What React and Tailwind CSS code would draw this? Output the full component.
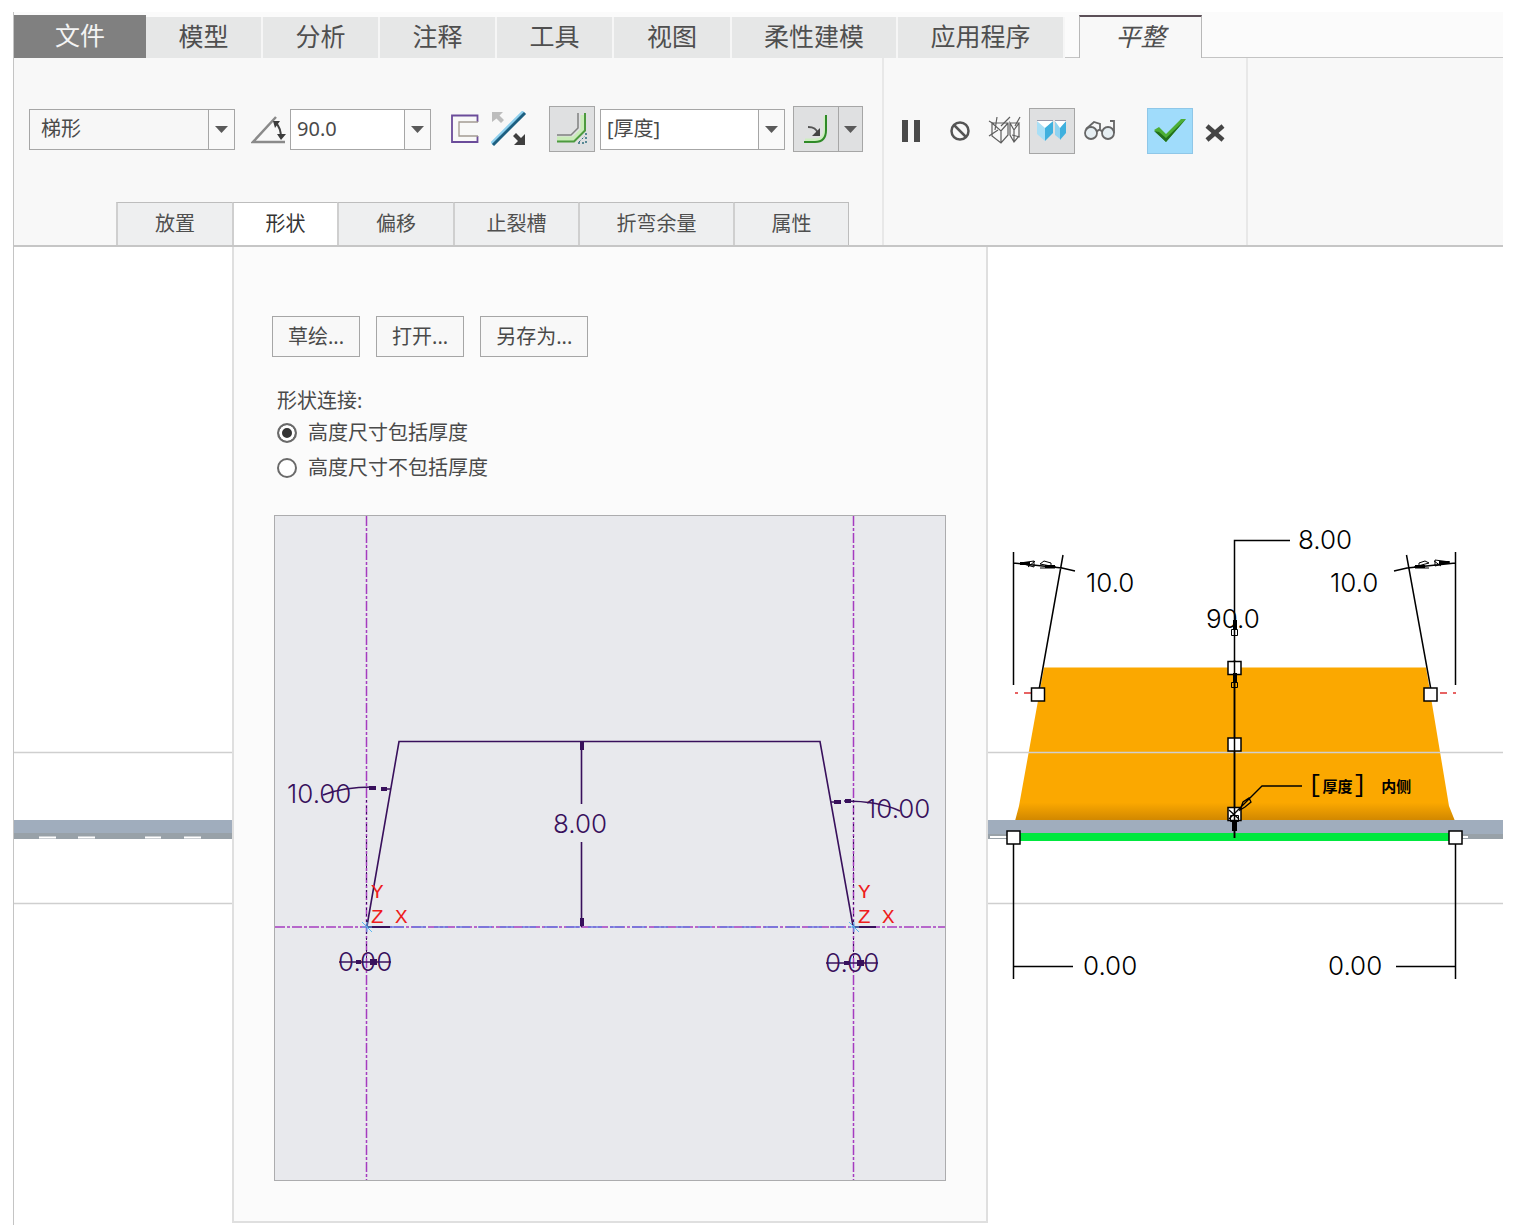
import React, { useState } from 'react';

const menuTabs = [
  { name: '模型', width: 'w-[117px]' },
  { name: '分析', width: 'w-[117px]' },
  { name: '注释', width: 'w-[117px]' },
  { name: '工具', width: 'w-[117px]' },
  { name: '视图', width: 'w-[118px]' },
  { name: '柔性建模', width: 'w-[166px]' },
  { name: '应用程序', width: 'w-[167px]' },
];

const subTabs = [
  { name: '放置', width: 'w-[116px]' },
  { name: '形状', width: 'w-[105px]' },
  { name: '偏移', width: 'w-[116px]' },
  { name: '止裂槽', width: 'w-[125px]' },
  { name: '折弯余量', width: 'w-[155px]' },
  { name: '属性', width: 'w-[116px]' },
];

function Caret() {
  return (
    <svg width="13" height="8" viewBox="0 0 13 8">
      <path d="M0 1h13L6.5 8z" fill="#5a5a5a" />
    </svg>
  );
}

function Combo({ label, options, width, bg }) {
  return (
    <div className={`relative h-[41px] shrink-0 ${width}`}>
      <select
        aria-label={label}
        className={`h-full w-full appearance-none border border-[#a6a6a6] pr-7 text-xl leading-6 text-[#4a4a4a] ${bg}`}
      >
        {options.map((o) => (
          <option key={o}>{o}</option>
        ))}
      </select>
      {/* arrow box over the select */}
      <span className="pointer-events-none absolute inset-y-0 right-0 flex w-[27px] items-center justify-center border border-[#a6a6a6] bg-[#f9f9f9]">
        <Caret />
      </span>
    </div>
  );
}

/* ---------- toolbar icons ---------- */

function AngleIcon() {
  return (
    <svg width="36" height="30" viewBox="0 0 36 30" fill="none">
      <path d="M25 3L2 28h32" stroke="#8a8a8a" strokeWidth="2.5" />
      <path d="M25 9c4 4 5 9 5 15" stroke="#444" strokeWidth="2" />
      <path d="M22 7h7l-5 7zM26 20h9l-5 6z" fill="#3c3c3c" />
    </svg>
  );
}

function ProfileIcon() {
  return (
    <svg width="28" height="30" viewBox="0 0 28 30" fill="none">
      <path d="M26.500 8V1.500H1V28h25.500v-6" stroke="#6b4c9a" strokeWidth="1.8" />
      <path d="M27 8H8v14h19" stroke="#a39a92" strokeWidth="1.3" />
    </svg>
  );
}

function FlipIcon() {
  return (
    <svg width="36" height="36" viewBox="0 0 36 36" fill="none">
      <path d="M1 33L33 1" stroke="#8fd0ee" strokeWidth="4.5" />
      <path d="M2 34L34 2" stroke="#1d5f80" strokeWidth="3" />
      <path d="M1 1h11L8.500 4.500l4.500 4.500-3 3-4.500-4.500L1 11z" fill="#bdbdbd" />
      <path d="M34 34H23l4-4-5-5 3-3 5 5 4-4z" fill="#3f3f3f" />
    </svg>
  );
}

function BendIcon() {
  return (
    <svg width="34" height="34" viewBox="0 0 34 34" fill="none">
      <path d="M2 27h17l9-9V3" stroke="#c9ecb8" strokeWidth="5" />
      <path d="M2 23h14l7-7V1" stroke="#808080" strokeWidth="1.5" />
      <path d="M2 29.500h17l11-11V1" stroke="#4d9a3f" strokeWidth="2" />
      <path d="M31 21v10H21" stroke="#2e6c7c" strokeWidth="1.5" strokeDasharray="2 2" />
      <path d="M24 30l6-6" stroke="#2e6c7c" strokeDasharray="2 2" />
    </svg>
  );
}

function InnerRadiusIcon() {
  return (
    <svg width="26" height="30" viewBox="0 0 26 30" fill="none">
      <path d="M2 26h10c7 0 10-4 10-11V2" stroke="#cdeec0" strokeWidth="3" />
      <path d="M1 28h11c8 0 11-4 11-12V1" stroke="#2f8a28" strokeWidth="2" />
      <path d="M5 13c6 0 8 2 10 6" stroke="#555" strokeWidth="2" />
      <path d="M17 14v8H9z" fill="#444" />
    </svg>
  );
}

function PauseIcon() {
  return (
    <svg width="20" height="24" viewBox="0 0 20 24" fill="#4b4b4b">
      <path d="M1 1h6v22H1zM13 1h6v22h-6z" />
    </svg>
  );
}

function NoneIcon() {
  return (
    <svg width="22" height="22" viewBox="0 0 22 22" fill="none" stroke="#555" strokeWidth="2.5">
      <circle cx="11" cy="11" r="8.500" />
      <path d="M5 5l12 12" />
    </svg>
  );
}

function WireframeIcon() {
  return (
    <svg width="34" height="30" viewBox="0 0 34 30" fill="none" stroke="#5e5e5e" strokeWidth="1.2">
      <path d="M4 7h16v12l-7 8-9-7zM4 7l9 8 7-8M13 15v12" />
      <path d="M22 7h9l-5 7-4-7v12l4 7 5-6M26 14v12M31 7v13" />
      <path d="M1 20l9-6M9 1L7 14M1 5l5 3M13 10l9-9M27 10l5-9M24 19l8 2" />
    </svg>
  );
}

function SolidPreviewIcon() {
  return (
    <svg width="32" height="26" viewBox="0 0 32 26">
      <path d="M1 3l8 6v14l-8-7z" fill="#a9dff6" />
      <path d="M9 9l8-6v12l-8 8z" fill="#3fb0de" />
      <path d="M1 3h16L9 10z" fill="#fff" />
      <path d="M19 3l5 6v12l-5-4z" fill="#8fd3f1" />
      <path d="M24 9l6-6v12l-6 7z" fill="#3fb0de" />
      <path d="M19 3h11l-6 7z" fill="#fff" />
      <path d="M1 2.500h16M19 2.500h11" stroke="#99a" />
    </svg>
  );
}

function GlassesIcon() {
  return (
    <svg width="34" height="24" viewBox="0 0 34 24" fill="none" stroke="#666" strokeWidth="1.8">
      <circle cx="8" cy="14" r="6" fill="#e6eef2" />
      <circle cx="25" cy="14" r="6" fill="#e6eef2" />
      <path d="M14 13c1-3 4-3 5 0M3 10l8-7 6 2v5M31 14V2h-4" />
    </svg>
  );
}

function CheckIcon() {
  return (
    <svg width="34" height="26" viewBox="0 0 34 26">
      <path d="M1 12l5-3 7 7L28 1h5L13 24z" fill="#4cae35" />
      <path d="M1 13l5 1 7 6L33 1 13 24z" fill="#22701c" />
    </svg>
  );
}

function CloseIcon() {
  return (
    <svg width="20" height="18" viewBox="0 0 20 18" stroke="#454545" strokeWidth="4.5">
      <path d="M2 2l16 14" />
      <path d="M18 2L2 16" />
    </svg>
  );
}

/* ---------- ribbon ---------- */

function MenuBar() {
  return (
    <nav className="flex h-[46px] items-end bg-[#fbfbfb] text-[25px] leading-8 text-[#4f4f4f]">
      <button className="h-[43px] w-[132px] shrink-0 bg-[#808080] pb-1 text-[#f4f4f4]">文件</button>
      {menuTabs.map((t) => (
        <button key={t.name} className={`h-[41px] shrink-0 border-r-2 border-[#f6f6f6] bg-[#e6e7e7] pb-1 ${t.width}`}>
          {t.name}
        </button>
      ))}
      <span className="h-full w-[14px] shrink-0 border-b border-[#c4c4c4]" />
      <button className="h-[43px] w-[123px] shrink-0 border-x border-t-2 border-x-[#b8b8b8] border-t-[#5c5058] bg-[#f8f8f8] pb-1 italic">
        平整
      </button>
      <span className="h-full flex-1 border-b border-[#c4c4c4]" />
    </nav>
  );
}

function Toolbar() {
  return (
    <div className="flex items-center pt-12 pl-[15px]">
      <Combo label="形状类型" options={['梯形']} width="w-[206px]" bg="bg-[#f7f7f7] pl-[11px]" />
      <span className="ml-4 flex w-[39px]">
        <AngleIcon />
      </span>
      <Combo label="折弯角度" options={['90.0']} width="w-[141px]" bg="bg-white pl-[6px]" />
      <button aria-label="轮廓" className="ml-5">
        <ProfileIcon />
      </button>
      <button aria-label="反向" className="ml-3">
        <FlipIcon />
      </button>
      <button
        aria-label="折弯"
        className="ml-[22px] flex h-[46px] w-[46px] shrink-0 items-center justify-center border border-[#a6a6a6] bg-[#dfe0e1]"
      >
        <BendIcon />
      </button>
      <span className="ml-[5px]">
        <Combo label="折弯半径" options={['[厚度]']} width="w-[185px]" bg="bg-white pl-[6px]" />
      </span>
      <div className="ml-2 flex h-[46px] w-[70px] border border-[#a6a6a6] bg-[#dfe0e1]">
        <button aria-label="内侧半径" className="flex flex-1 items-center justify-center border-r border-[#a6a6a6]">
          <InnerRadiusIcon />
        </button>
        <button aria-label="更多半径选项" className="flex w-[23px] items-center justify-center">
          <Caret />
        </button>
      </div>
    </div>
  );
}

function SubTabs({ active, onChange }) {
  return (
    <div className="flex pl-[102px] text-xl leading-6 text-[#4f4f4f]">
      {subTabs.map((t) => (
        <button
          key={t.name}
          onClick={() => onChange(t.name)}
          className={`h-[43px] shrink-0 border-t border-l-2 border-t-[#bdbdbd] border-l-[#cfcfcf] last:border-r last:border-r-[#bdbdbd] ${t.width} ${
            active === t.name ? 'bg-white text-[#333]' : 'bg-[#eeeff0]'
          }`}
        >
          {t.name}
        </button>
      ))}
    </div>
  );
}

function Actions() {
  return (
    <div className="flex w-[362px] shrink-0 items-center self-start pt-[2px] pl-[17px]">
      <button aria-label="暂停">
        <PauseIcon />
      </button>
      <button aria-label="无预览" className="ml-7">
        <NoneIcon />
      </button>
      <button aria-label="线框预览" className="ml-[17px]">
        <WireframeIcon />
      </button>
      <button
        aria-label="实体预览"
        className="ml-[7px] flex h-[46px] w-[46px] items-center justify-center border border-[#a6a6a6] bg-[#dfe0e1]"
      >
        <SolidPreviewIcon />
      </button>
      <button aria-label="查看" className="ml-2">
        <GlassesIcon />
      </button>
      <button
        aria-label="确定"
        className="ml-[30px] flex h-[46px] w-[46px] items-center justify-center border border-[#8fc7e8] bg-[#a0dcfb]"
      >
        <CheckIcon />
      </button>
      <button aria-label="取消" className="mt-1 ml-3">
        <CloseIcon />
      </button>
    </div>
  );
}

/* ---------- shape panel ---------- */

function SketchPreview() {
  return (
    <svg
      viewBox="275 516 670 664"
      className="block h-auto w-full fill-[#38105c] font-['Inter',sans-serif] text-[26px] font-light"
    >
      {/* centre lines */}
      <g stroke="#a53cc0" strokeWidth="1.5" strokeDasharray="10 2 3 2">
        <path d="M366.500 516V1180M853.500 516V1180M275 927H946" />
      </g>
      <path d="M368 927H853" stroke="#6b7be0" strokeWidth="1.5" strokeDasharray="14 8" />

      {/* trapezoid */}
      <path d="M367 926L399 741.500H820L853 926" fill="none" stroke="#38105c" strokeWidth="1.6" />
      <path d="M366.500 800V962M853.500 800V962" stroke="#38105c" strokeDasharray="2 4" />
      <path d="M367 927h23M853 927h23" stroke="#38105c" strokeWidth="2" />
      <path d="M367 922v10M362 927h10M362 922l10 10M854 922v10M849 927h10M849 922l10 10" stroke="#58b8f0" />

      {/* height dimension */}
      <path d="M581.500 742v62M581.500 842v85" stroke="#38105c" strokeWidth="1.6" />
      <path d="M580 742h4v8h-4zM580 918h4v8h-4z" />
      <text x="553" y="833">8.00</text>

      {/* angle dimensions */}
      <path d="M323 795q20-8 50-8M381 789h10" fill="none" stroke="#38105c" strokeWidth="1.6" />
      <path d="M369 786h7v4h-7zM381 787h6v4h-6z" />
      <text x="287" y="803">10.00</text>
      <path d="M831 802h8M844 801q35 0 56 10" fill="none" stroke="#38105c" strokeWidth="1.6" />
      <path d="M834 800h7v4h-7zM845 799h6v4h-6z" />
      <text x="866" y="818">10.00</text>

      {/* offsets */}
      <path d="M339 962h52M826 963h52" stroke="#38105c" strokeWidth="1.6" />
      <path d="M356 960h5v4h-5zM370 959h7v6h-7zM844 961h5v4h-5zM857 960h7v6h-7z" />
      <text x="338" y="971">0.00</text>
      <text x="825" y="972">0.00</text>

      {/* coordinate systems */}
      <g className="fill-[#ee1c1c] font-['Liberation_Mono',monospace] text-[21px]">
        <text x="371" y="898">Y</text>
        <text x="371" y="923">Z</text>
        <text x="395" y="923">X</text>
        <text x="858" y="898">Y</text>
        <text x="858" y="923">Z</text>
        <text x="882" y="923">X</text>
      </g>
    </svg>
  );
}

function RadioRow({ label, checked, onChange }) {
  return (
    <label className="flex h-[35px] items-center gap-[11px]">
      <input
        type="radio"
        name="attach"
        checked={checked}
        onChange={onChange}
        className="h-5 w-5 appearance-none rounded-full border-2 border-[#6a6a6a] bg-white checked:bg-[#333] checked:shadow-[inset_0_0_0_3px_#fff]"
      />
      {label}
    </label>
  );
}

function ShapePanel() {
  const [include, setInclude] = useState(true);
  return (
    <section className="border-2 border-t-0 border-[#dfdfdf] bg-[#fbfbfb] pt-[69px] pr-10 pb-10 pl-[38px] text-xl leading-6 text-[#4a4a4a]">
      <div className="flex gap-4">
        {['草绘...', '打开...', '另存为...'].map((b) => (
          <button key={b} className="h-[41px] border border-[#a6a6a6] bg-[#f8f8f8] px-[15px]">
            {b}
          </button>
        ))}
      </div>
      <fieldset className="mt-8 pl-[5px]">
        <legend className="h-[26px]">形状连接:</legend>
        <RadioRow label="高度尺寸包括厚度" checked={include} onChange={() => setInclude(true)} />
        <RadioRow label="高度尺寸不包括厚度" checked={!include} onChange={() => setInclude(false)} />
      </fieldset>
      <div className="mt-[30px] ml-[2px] border border-[#acacae] bg-[#e8e9ed]">
        <SketchPreview />
      </div>
    </section>
  );
}

/* ---------- model canvas ---------- */

function SheetEdge() {
  return (
    <svg viewBox="14 247 218 975" className="block h-auto w-full">
      <path d="M14 752.500H232M14 903.500H232" stroke="#cfcfcf" strokeWidth="1.6" />
      <path d="M14 820H232V834H14z" fill="#a0adbd" />
      <path d="M14 833H232V839H14z" fill="#98a1a8" />
      <path d="M39 837.500h17M78 837.500h17M145 837.500h16M184 837.500h17" stroke="#fff" strokeWidth="2" />
    </svg>
  );
}

function Handle({ x, y }) {
  return <rect x={x - 6.5} y={y - 6.5} width="13" height="13" fill="#fff" stroke="#000" strokeWidth="1.5" />;
}

function ModelView() {
  return (
    <svg
      viewBox="988 247 515 975"
      className="block h-auto w-full fill-black font-['Inter',sans-serif] text-[26px] font-light"
    >
      <defs>
        <linearGradient id="wall" x1="0" y1="0" x2="0" y2="1">
          <stop offset="0" stopColor="#fba800" />
          <stop offset="0.88" stopColor="#fba800" />
          <stop offset="1" stopColor="#cf8600" />
        </linearGradient>
      </defs>

      {/* flange wall */}
      <path d="M1044 667.500H1426L1449 806L1455 821H1015L1019 806z" fill="url(#wall)" />
      <path d="M988 752.500H1503M988 903.500H1503" stroke="#cfcfcf" strokeWidth="1.6" />

      {/* base sheet and attachment edge */}
      <path d="M988 820H1503V834H988z" fill="#a0adbd" />
      <path d="M988 834H1503V839H988z" fill="#98a1a8" />
      <path d="M990 837h20M1463 837h5" stroke="#fff" strokeWidth="2" />
      <path d="M1014 833H1455V841H1014z" fill="#00e83e" />

      <g stroke="#000" strokeWidth="1.5" fill="none">
        <path d="M1013.500 552V685M1063 555L1039 690M1013.500 563L1062 568 1075 571" />
        <path d="M1455.500 552V685M1406.500 555L1431 690M1455.500 563L1407 568 1394 571" />
        <path d="M1234.500 838V540.500H1290" />
        <path d="M1013.500 838V979M1013.500 966.500H1073M1455.500 838V979M1455.500 966.500H1396" />
      </g>
      <path d="M1015 693h3M1024 693h7M1440 693h7M1453 693h3" stroke="#e03030" strokeWidth="1.5" />

      {/* dimension arrows */}
      <g stroke="#000" fill="none">
        <path d="M1020 563l14-2v6zM1056 567l-16-3 4-3 7 2v4M1028 567l7-6M1040 568h15" />
        <path d="M1450 562l-15-2v6zM1414 567l15-4-4-2-6 2v4M1441 566l-7-5M1429 568h-14" />
      </g>
      <path d="M1020 562h10v3h-10zM1045 565h10v3h-10zM1415 565h10v3h-10zM1439 561h10v3h-10z" />

      <Handle x={1234.5} y={668} />
      <Handle x={1234.5} y={744.5} />
      <Handle x={1234.5} y={814} />
      <Handle x={1038} y={694.5} />
      <Handle x={1430.5} y={694.5} />
      <Handle x={1013.5} y={837.5} />
      <Handle x={1455.5} y={837.5} />

      <path d="M1234.500 660V838" stroke="#000" strokeWidth="1.5" />
      <path d="M1233 620h4v9h-4zM1233 673h4v9h-4zM1232 820h5v11h-5z" />
      <path d="M1231.500 629.500h6v6h-6zM1231.500 682.500h6v5h-6zM1230.500 815.500h8v6h-8z" fill="none" stroke="#000" />
      <path d="M1229 810l10 9M1229 819L1262 786H1302M1240 810l3-8 6-4 2 4-6 5z" fill="none" stroke="#000" strokeWidth="1.3" />

      <text x="1298" y="549">8.00</text>
      <text x="1086" y="592">10.0</text>
      <text x="1330" y="592">10.0</text>
      <text x="1206" y="628">90.0</text>
      <text x="1083" y="975">0.00</text>
      <text x="1328" y="975">0.00</text>
      <text x="1308" y="792" className="font-['Liberation_Mono','Noto_Sans_CJK_SC',monospace] text-2xl font-normal">
        [<tspan className="text-[15px] font-bold">厚度</tspan>] <tspan className="text-[15px] font-bold">内侧</tspan>
      </text>
    </svg>
  );
}

export default function App() {
  const [tab, setTab] = useState('形状');
  return (
    <div className="flex min-h-screen flex-col bg-white pt-3 pr-6 pl-[13px] font-['Noto_Sans','Noto_Sans_CJK_SC',sans-serif]">
      <div className="flex flex-1 flex-col border-l border-[#c4c4c4]">
        <MenuBar />
        <header className="flex border-b-2 border-[#c6c6c6] bg-[#f8f8f8]">
          <div className="flex h-[187px] w-[870px] shrink-0 flex-col justify-between border-r-2 border-[#e8e8e8]">
            <Toolbar />
            <SubTabs active={tab} onChange={setTab} />
          </div>
          <div className="flex border-r-2 border-[#e8e8e8] pt-12">
            <Actions />
          </div>
        </header>
        <main className="grid flex-1 grid-cols-[218px_756px_1fr] items-start">
          <SheetEdge />
          <ShapePanel />
          <ModelView />
        </main>
      </div>
    </div>
  );
}
